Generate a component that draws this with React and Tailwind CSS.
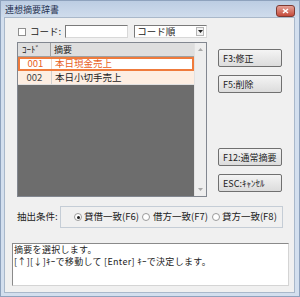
import React from 'react';

const jp = { fontFamily: "'Noto Sans CJK JP', 'Noto Sans', sans-serif" };

const Btn = ({ label, className = '' }) => (
  <div className={`h-[18px] w-[64px] flex items-center pl-[4px] border border-[#707070] rounded-[2px] bg-gradient-to-b from-[#f4f4f4] to-[#dcdcdc] text-[9px] leading-none text-[#222] whitespace-nowrap ${className}`}>
    {label}
  </div>
);

const Radio = ({ checked }) => (
  <span className="w-[8px] h-[8px] rounded-full border border-[#9a9a9a] bg-white flex items-center justify-center shrink-0">
    {checked && <span className="w-[3px] h-[3px] rounded-full bg-[#222]" />}
  </span>
);

export default function App() {
  return (
    <div className="w-[300px] h-[297px] flex flex-col bg-[#d3dfee] border border-[#8ea2bd] overflow-hidden" style={jp}>
      {/* Title bar */}
      <div className="h-[16px] shrink-0 flex items-center justify-between bg-gradient-to-b from-[#bccde3] to-[#cfdcec]">
        <span className="pl-[4px] text-[9px] text-[#1f3150] leading-none">連想摘要辞書</span>
        <div className="mr-[4px] mt-[3px] w-[19px] h-[12px] rounded-[3px] border border-[#7d3a32] bg-gradient-to-b from-[#e4a097] to-[#c4493a] flex items-center justify-center">
          <svg width="7" height="6" viewBox="0 0 7 6">
            <path d="M1 1 L6 5 M6 1 L1 5" stroke="#fff" strokeWidth="1.6" />
          </svg>
        </div>
      </div>

      {/* Client area */}
      <div className="flex-1 ml-[3px] mr-[4px] mb-[3px] bg-[#f0f0f0] border border-[#a9b8ca] flex flex-col">
        {/* Top row */}
        <div className="mt-[7px] h-[13px] flex items-center">
          <span className="ml-[13px] w-[8px] h-[8px] border border-[#8f8f8f] bg-white" />
          <span className="ml-[4px] text-[9.5px] text-[#222] leading-none">コード:</span>
          <div className="ml-[4px] w-[63px] h-[13px] bg-white border border-[#7a7a7a] border-r-[#d8d8d8] border-b-[#d8d8d8]" />
          <div className="ml-[6px] w-[73px] h-[13px] bg-white border border-[#7a7a7a] border-r-[#d8d8d8] border-b-[#d8d8d8] flex items-center justify-between">
            <span className="pl-[2px] text-[9.5px] text-[#222] leading-none">コード順</span>
            <span className="mr-[2px] w-[8px] h-[9px] border border-[#b5b5b5] bg-[#f2f2f2] flex items-center justify-center">
              <svg width="5" height="3" viewBox="0 0 5 3"><path d="M0 0 H5 L2.5 3 Z" fill="#222" /></svg>
            </span>
          </div>
        </div>

        {/* Grid and buttons */}
        <div className="mt-[4px] flex">
          <div className="ml-[12px] w-[190px] h-[155px] border border-[#828790] flex bg-[#6d6d6d]">
            <div className="flex-1 flex flex-col">
              <div className="h-[14px] flex bg-[#dedede] border-b border-[#a0a0a0] text-[9px] leading-none text-[#222]">
                <div className="w-[33px] pl-[4px] flex items-center border-r border-[#a0a0a0]">ｺｰﾄﾞ</div>
                <div className="pl-[3px] flex items-center">摘要</div>
              </div>
              <div className="h-[14px] flex bg-white border-2 border-[#ef7b3c] text-[9.5px] leading-none text-[#e8601c]">
                <div className="w-[31px] flex items-center justify-center">001</div>
                <div className="pl-[3px] flex items-center border-l border-[#f0d8c8]">本日現金売上</div>
              </div>
              <div className="h-[14px] flex bg-[#fdeee2] border-b border-[#e0e0e0] text-[9.5px] leading-none text-[#222]">
                <div className="w-[33px] flex items-center justify-center text-[#444]">002</div>
                <div className="pl-[3px] flex items-center border-l border-[#d0d0d0]">本日小切手売上</div>
              </div>
            </div>
            <div className="w-[12px] bg-[#eeeeee] border-l border-[#e2e2e2] flex flex-col items-center justify-between py-[5px]">
              <svg width="5" height="3" viewBox="0 0 5 3"><path d="M0 3 H5 L2.5 0 Z" fill="#a8a8a8" /></svg>
              <svg width="5" height="3" viewBox="0 0 5 3"><path d="M0 0 H5 L2.5 3 Z" fill="#a8a8a8" /></svg>
            </div>
          </div>
          <div className="ml-[11px] flex flex-col">
            <Btn label="F3:修正" className="mt-[7px]" />
            <Btn label="F5:削除" className="mt-[8px]" />
            <Btn label="F12:通常摘要" className="mt-[55px]" />
            <Btn label="ESC:ｷｬﾝｾﾙ" className="mt-[8px]" />
          </div>
        </div>

        {/* Filter row */}
        <div className="mt-[9px] flex items-center">
          <span className="ml-[12px] w-[43px] text-[9.5px] text-[#222] leading-none whitespace-nowrap">抽出条件:</span>
          <div className="w-[223px] h-[22px] border border-[#c5cdd6] flex items-center text-[9.5px] leading-none text-[#222] whitespace-nowrap">
            <span className="ml-[13px]"><Radio checked /></span>
            <span className="ml-[2px]">貸借一致(F6)</span>
            <span className="ml-[3px]"><Radio /></span>
            <span className="ml-[3px]">借方一致(F7)</span>
            <span className="ml-[4px]"><Radio /></span>
            <span className="ml-[2px]">貸方一致(F8)</span>
          </div>
        </div>

        {/* Message box */}
        <div className="mt-[15px] ml-[7px] w-[277px] h-[43px] bg-white border border-[#8a8a8a] border-r-[#d4d4d4] border-b-[#d4d4d4] px-[1px] text-[9px] tracking-[0.3px] leading-[12px] text-[#222] whitespace-nowrap">
          <div>摘要を選択します。</div>
          <div>[↑][↓]ｷｰで移動して [Enter] ｷｰで決定します。</div>
        </div>
      </div>
    </div>
  );
}
